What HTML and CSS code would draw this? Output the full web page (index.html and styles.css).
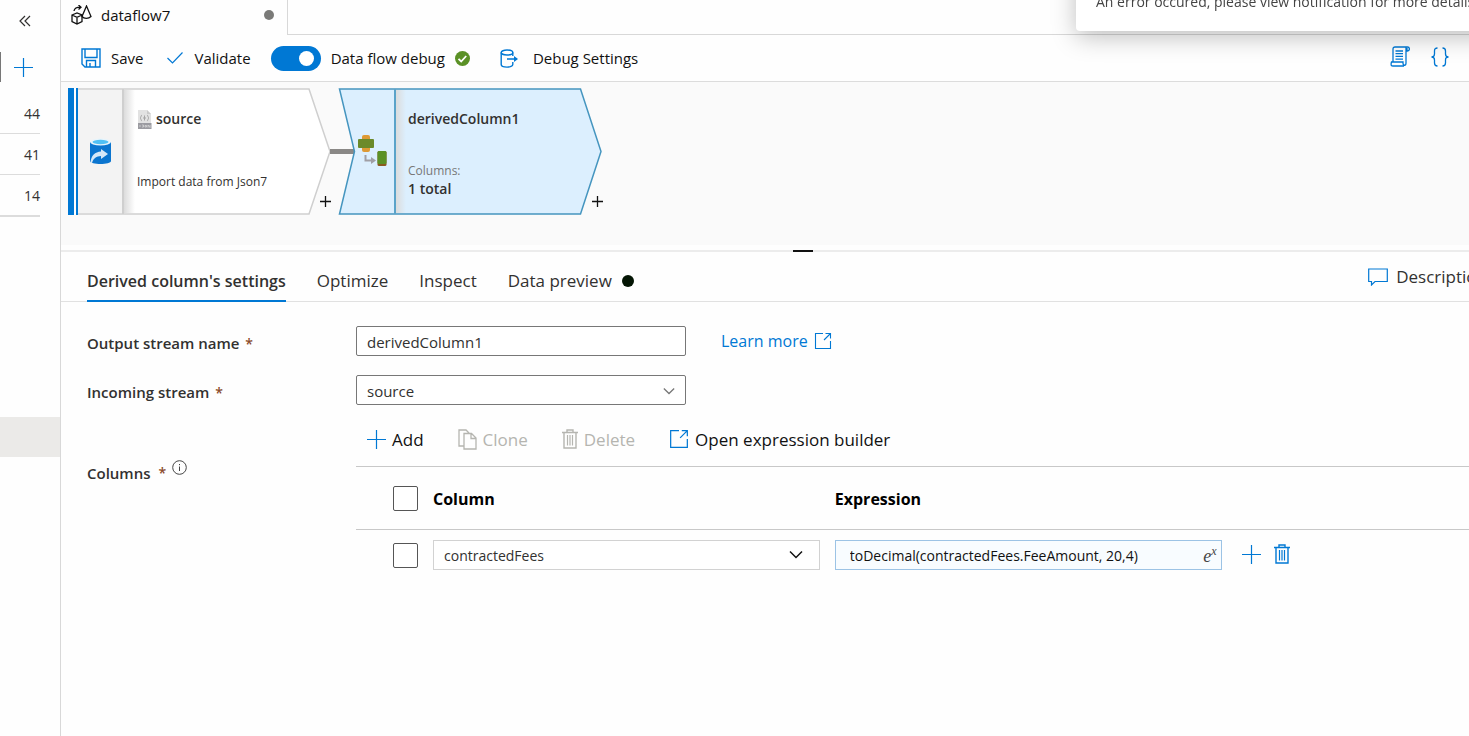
FILE: index.html
```html
<!DOCTYPE html>
<html lang="en">
<head>
    <meta charset="UTF-8">
    <meta name="viewport" content="width=device-width, initial-scale=1.0">
    <title>dataflow7</title>
    <link rel="stylesheet" href="styles.css">
</head>
<body>
    <svg class="sprite" aria-hidden="true">
        <symbol id="plus" viewBox="0 0 20 20">
            <path d="M10.500 1v19M1 10.500h19" fill="none" stroke="currentColor" stroke-width="1.200"/>
        </symbol>
        <symbol id="open" viewBox="0 0 18 18">
            <path d="M9 1.500H1.500v15h15V9M10 8l6.500-6.500M11.500 1.500h5v5" fill="none" stroke="currentColor" stroke-width="1.100"/>
        </symbol>
        <symbol id="trash" viewBox="0 0 16 20">
            <path d="M0 3.500h16M5 3.500V1h6v2.500M2 3.500V19h12V3.500" fill="none" stroke="currentColor" stroke-width="1.400"/>
            <path d="M5.500 6v10.500M8 6v10.500M10.500 6v10.500" fill="none" stroke="currentColor" stroke-width="1.200"/>
        </symbol>
        <symbol id="chevron" viewBox="0 0 14 9">
            <path d="M1 1.500l6 6 6-6" fill="none" stroke="currentColor" stroke-width="1.500"/>
        </symbol>
    </svg>

    <div class="app">
        <aside class="sidebar">
            <button class="collapse" aria-label="Collapse">
                <svg width="12" height="12" viewBox="0 0 12 12"><path d="M6 1L1 6l5 5M11 1L6 6l5 5" fill="none" stroke="currentColor" stroke-width="1.200"/></svg>
            </button>
            <div class="filter">
                <span class="search-edge"></span>
                <button aria-label="New resource"><svg class="blue" width="20" height="20"><use href="#plus"/></svg></button>
            </div>
            <ul class="counts">
                <li>44</li>
                <li>41</li>
                <li>14</li>
            </ul>
            <div class="selected"></div>
        </aside>

        <main class="main">
            <header class="tabbar">
                <div class="file-tab">
                    <svg width="21" height="20" viewBox="0 0 21 20" fill="none" stroke="#111" stroke-width="1.300">
                        <path d="M1 10l5-2 5 2v6.500L6 19l-5-2.500zM1 10l5 2.300L11 10M6 12.300V19"/>
                        <path d="M15.500 1L11 11.500c2 2.500 6.500 2.500 9 0z"/>
                        <path d="M3 6c.5-3 3-3.800 6.500-3.800M7.500 0l2.500 2.200-2.500 2.300"/>
                    </svg>
                    <span>dataflow7</span>
                    <i class="unsaved"></i>
                </div>
                <div class="tab-rest"></div>
            </header>

            <div class="toolbar">
                <button class="tool save">
                    <svg class="blue" width="20" height="20" viewBox="0 0 20 20" fill="none" stroke="currentColor" stroke-width="1.400"><path d="M1 1h18v18H4l-3-3zM4 1v8.500h12V1M5.500 19v-6.500h9V19M9 19v-4"/></svg>
                    Save
                </button>
                <button class="tool validate">
                    <svg class="blue" width="16" height="12" viewBox="0 0 16 12" fill="none" stroke="currentColor" stroke-width="1.200"><path d="M.5 6l5 5L15.500.5"/></svg>
                    Validate
                </button>
                <label class="tool debug">
                    <input type="checkbox" class="toggle" checked>
                    Data flow debug
                    <svg width="15" height="15" viewBox="0 0 15 15"><circle cx="7.500" cy="7.500" r="7.500" fill="#5b9126"/><path d="M3.500 7.800l2.700 2.700 5-5.500" fill="none" stroke="#fff" stroke-width="1.800"/></svg>
                </label>
                <button class="tool settings">
                    <svg class="blue" width="19" height="19" viewBox="0 0 19 19" fill="none" stroke="currentColor" stroke-width="1.400"><ellipse cx="7" cy="3.500" rx="5.800" ry="2.500"/><path d="M1.200 3.500v12C1.200 19 12.800 19 12.800 15.500V13M12.800 3.500V7M7 10h9"/><path d="M14 7l4 3-4 3z" fill="currentColor" stroke="none"/></svg>
                    Debug Settings
                </button>
                <div class="tool-end">
                    <button aria-label="Script">
                        <svg class="blue" width="20" height="21" viewBox="0 0 20 21" fill="none" stroke="currentColor" stroke-width="1.300"><path d="M3 16V3c0-1.500.8-2 2-2h12.500c2.500 0 2.500 4 0 4H15.500M16 1.200V17c0 3-3 3-3 0v-1H1.500c-1.200 4 .5 4 1.500 4h11M17 2v3"/><path d="M5.500 5h7.500M5.500 7.700h7.500M5.500 10.400h7.500M5.500 13.100h7.500"/></svg>
                    </button>
                    <button aria-label="Code">
                        <svg class="blue" width="18" height="20" viewBox="0 0 18 20" fill="none" stroke="currentColor" stroke-width="1.300"><path d="M6.500 1C4 1 3.500 2 3.500 4v3c0 2-.8 3-3 3 2.200 0 3 1 3 3v3c0 2 .5 3 3 3M11.500 1c2.500 0 3 1 3 3v3c0 2 .8 3 3 3-2.200 0-3 1-3 3v3c0 2-.5 3-3 3"/></svg>
                    </button>
                </div>
            </div>

            <section class="canvas">
                <svg class="graph" width="560" height="140" viewBox="0 0 560 140">
                    <defs>
                        <linearGradient id="fold"><stop offset="0" stop-color="#dcdcdc"/><stop offset="1" stop-color="#dcdcdc" stop-opacity="0"/></linearGradient>
                    </defs>
                    <path d="M16 7H248l21 62.500-21 62.500H16z" fill="#fff" stroke="#cfcfcf" stroke-width="1.500"/>
                    <path d="M16 8h46v123H16z" fill="#f3f3f3"/>
                    <path d="M63 8h11v123H63z" fill="url(#fold)"/>
                    <path d="M62 7v125" stroke="#cfcfcf" stroke-width="2"/>
                    <path d="M7 6h6v127H7zM15 6h2v127h-2z" fill="#0078d4"/>
                    <path d="M13 6h2v127h-2z" fill="#fff"/>
                    <path d="M269 69.500h25" stroke="#8a8886" stroke-width="5"/>
                    <path d="M278.500 7H519.500l20.500 62.500-20.500 62.500H278.500l15-62.500z" fill="#dceffe" stroke="#4595bf" stroke-width="1.500"/>
                    <path d="M335 8h10v123h-10z" fill="url(#fold)"/>
                    <path d="M334 7v125" stroke="#5ba3c9" stroke-width="2"/>
                    <!-- source cylinder -->
                    <path d="M29 60v19c0 4 21 4 21 0V60z" fill="#0b75cf"/>
                    <ellipse cx="39.500" cy="60" rx="10.500" ry="3.500" fill="#e8f4fb"/>
                    <ellipse cx="39.500" cy="60" rx="8" ry="2.200" fill="#50c0f5"/>
                    <path d="M29.500 81c.5-8 4.500-11 10.500-11.500V67l7 5-7 5v-3c-4.500.3-7.500 2-9 7z" fill="#d5e8f8"/>
                    <!-- json file -->
                    <path d="M77 28h9l4 4v14H77z" fill="#e2e2e2"/>
                    <path d="M86 28v4h4" fill="#cacaca"/>
                    <path d="M81 33c-1 0-1 3-2 3 1 0 1 3 2 3M86 33c1 0 1 3 2 3-1 0-1 3-2 3M83.500 33.500v5M82 36h3" fill="none" stroke="#a5a5a5"/>
                    <path d="M77 41h13.500v6H77z" fill="#9b9ba1"/>
                    <path d="M79 43v2M81 43h1.500v2H81M84 43.500h1.500v1.500H84zM87 45.500V43l2 2.500V43" fill="none" stroke="#dedede" stroke-width=".7"/>
                    <!-- derived column -->
                    <rect x="301" y="53" width="8" height="17" rx="2" fill="#dd9a36"/>
                    <rect x="297" y="57" width="16" height="9" rx="1" fill="#6b8a2a"/>
                    <rect x="316.500" y="69" width="9" height="15" rx="1.500" fill="#8a5a20"/>
                    <rect x="316.500" y="69" width="9" height="13" rx="1.500" fill="#5b9126"/>
                    <path d="M304.500 73v5.500h7" fill="none" stroke="#a09fa5" stroke-width="2"/>
                    <path d="M310 75l5 3.500-5 3.500z" fill="#a09fa5"/>
                </svg>
                <div class="node node-source">
                    <strong>source</strong>
                    <span>Import data from Json7</span>
                </div>
                <button class="node-add add-source" aria-label="Add after source"><svg width="11" height="11" viewBox="0 0 11 11"><path d="M5.500 0v11M0 5.500h11" stroke="#111" stroke-width="1.300"/></svg></button>
                <div class="node node-derived">
                    <strong>derivedColumn1</strong>
                    <div>
                        <small>Columns:</small>
                        <b>1 total</b>
                    </div>
                </div>
                <button class="node-add add-derived" aria-label="Add after derivedColumn1"><svg width="11" height="11" viewBox="0 0 11 11"><path d="M5.500 0v11M0 5.500h11" stroke="#111" stroke-width="1.300"/></svg></button>
            </section>

            <div class="splitter"><i></i></div>

            <nav class="tabs">
                <a href="#" class="active">Derived column's settings</a>
                <a href="#">Optimize</a>
                <a href="#">Inspect</a>
                <a href="#" class="preview">Data preview <i class="dot"></i></a>
                <a href="#" class="description">
                    <svg class="blue" width="20" height="18" viewBox="0 0 20 18" fill="none" stroke="currentColor" stroke-width="1.200"><path d="M.7 1h18.600v12.500H7L3.500 17v-3.500H.7z"/></svg>
                    Description
                </a>
            </nav>

            <form class="form">
                <label class="label" for="stream">Output stream name <span>*</span></label>
                <div class="field">
                    <input class="box" id="stream" type="text" value="derivedColumn1">
                    <a class="learn" href="#">Learn more <svg width="18" height="18"><use href="#open"/></svg></a>
                </div>

                <label class="label" for="incoming">Incoming stream <span>*</span></label>
                <div class="field">
                    <div class="select-wrap">
                        <select class="box" id="incoming"><option>source</option></select>
                        <svg class="arrow" width="12" height="8"><use href="#chevron"/></svg>
                    </div>
                </div>

                <div class="label columns-label">Columns <span>*</span>
                    <svg width="15" height="15" viewBox="0 0 15 15" fill="none" stroke="#444"><circle cx="7.500" cy="7.500" r="6.800"/><path d="M7.500 6.500V11M7.500 4v1.200"/></svg>
                </div>
                <div class="columns">
                    <div class="actions">
                        <button type="button" class="add"><svg class="blue" width="20" height="20"><use href="#plus"/></svg>Add</button>
                        <button type="button" class="clone" disabled><svg width="19" height="21" viewBox="0 0 19 21" fill="none" stroke="currentColor" stroke-width="1.300"><path d="M6 17H1V1h7l3 3M6 4.500h7.500l4.500 4.500v11H6zM13 4.500V9.500h5"/></svg>Clone</button>
                        <button type="button" class="delete" disabled><svg width="16" height="20"><use href="#trash"/></svg>Delete</button>
                        <button type="button" class="builder"><svg class="blue" width="20" height="20"><use href="#open"/></svg>Open expression builder</button>
                    </div>
                    <table class="grid">
                        <thead>
                            <tr>
                                <th class="check"><input type="checkbox" aria-label="Select all"></th>
                                <th class="col">Column</th>
                                <th class="col">Expression</th>
                                <th></th>
                            </tr>
                        </thead>
                        <tbody>
                            <tr>
                                <td class="check"><input type="checkbox" aria-label="Select contractedFees"></td>
                                <td>
                                    <div class="select-wrap">
                                        <select class="cell" aria-label="Column"><option>contractedFees</option></select>
                                        <svg class="arrow dark" width="14" height="9"><use href="#chevron"/></svg>
                                    </div>
                                </td>
                                <td>
                                    <div class="select-wrap">
                                        <input class="cell expr" type="text" aria-label="Expression" value="toDecimal(contractedFees.FeeAmount, 20,4)">
                                        <span class="ex">e<sup>x</sup></span>
                                    </div>
                                </td>
                                <td>
                                    <div class="row-actions">
                                        <button type="button" aria-label="Add"><svg class="blue" width="20" height="20"><use href="#plus"/></svg></button>
                                        <button type="button" aria-label="Delete"><svg class="blue" width="16" height="20"><use href="#trash"/></svg></button>
                                    </div>
                                </td>
                            </tr>
                        </tbody>
                    </table>
                </div>
            </form>
        </main>
    </div>

    <div class="toast">An error occured, please view notification for more details</div>
</body>
</html>
```
FILE: styles.css
```css
*{
    box-sizing: border-box;
}
body{
    margin: 0;
    overflow: hidden;
    font-family: "Open Sans", "Noto Sans", sans-serif;
    font-size: 15px;
    color: #323130;
    background: #fefefe;
}
button{
    display: flex;
    align-items: center;
    padding: 0;
    border: 0;
    background: none;
    font: inherit;
    color: inherit;
}
a{
    color: inherit;
    text-decoration: none;
}
svg{
    display: block;
    flex: none;
}
.sprite{
    position: absolute;
    width: 0;
    height: 0;
}
.blue{
    color: #0078d4;
}
.app{
    display: flex;
    min-height: 100vh;
}

/* sidebar */
.sidebar{
    flex: none;
    width: 61px;
    border-right: 1px solid #d8d8d8;
}
.collapse{
    margin: 15px 0 0 19px;
}
.filter{
    display: flex;
    align-items: center;
    gap: 12px;
    height: 30px;
    margin-top: 25px;
}
.search-edge{
    width: 1px;
    height: 30px;
    background: #777;
}
.counts{
    list-style: none;
    margin: 11px 20px 0 0;
    padding: 0;
    font-size: 14px;
    text-align: right;
}
.counts li{
    height: 41px;
    line-height: 42px;
    border-bottom: 1px solid #dcdcdc;
}
.counts li:last-child{
    height: 42px;
    border-bottom-width: 2px;
}
.selected{
    height: 40px;
    margin-top: 200px;
    background: #ebeae8;
}

/* top bars */
.main{
    flex: 1;
    min-width: 0;
}
.tabbar{
    display: flex;
    height: 35px;
}
.file-tab{
    display: flex;
    align-items: center;
    gap: 9px;
    width: 227px;
    padding: 0 13px 6px 10px;
    border-right: 1px solid #d8d8d8;
    color: #111;
}
.unsaved{
    width: 10px;
    height: 10px;
    margin-left: auto;
    border-radius: 50%;
    background: #7a7a78;
}
.tab-rest{
    flex: 1;
    border-bottom: 1px solid #d8d8d8;
}
.toolbar{
    display: flex;
    align-items: center;
    height: 47px;
    padding: 0 20px;
    border-bottom: 1px solid #dcdcdc;
    color: #111;
}
.tool{
    display: flex;
    align-items: center;
    gap: 10px;
}
.validate{
    margin-left: 24px;
    gap: 11px;
}
.debug{
    margin-left: 20px;
}
.settings{
    margin-left: 30px;
    gap: 14px;
}
.toggle{
    appearance: none;
    display: flex;
    justify-content: flex-end;
    width: 50px;
    height: 25px;
    margin: 0;
    padding: 5px 7px;
    border-radius: 13px;
    background: #0078d4;
}
.toggle::before{
    content: "";
    width: 15px;
    height: 15px;
    border-radius: 50%;
    background: #fff;
}
.tool-end{
    display: flex;
    gap: 21px;
    margin-left: auto;
    padding-bottom: 3px;
}

/* data flow canvas */
.canvas{
    position: relative;
    height: 163px;
    background: #fafafa;
}
.graph, .node, .node-add{
    position: absolute;
}
.graph{
    left: 0;
    top: 0;
}
.node{
    display: flex;
    flex-direction: column;
    justify-content: space-between;
    top: 28px;
    font-size: 12px;
    line-height: 18px;
}
.node strong, .node b{
    display: block;
    font-size: 14px;
    font-weight: 600;
}
.node small{
    display: block;
    font-size: 12px;
    color: #777;
}
.node-source{
    left: 76px;
    height: 81px;
}
.node-source strong{
    padding-left: 19px;
}
.node-derived{
    left: 347px;
    height: 88px;
}
.node-add{
    top: 114px;
}
.add-source{
    left: 259px;
}
.add-derived{
    left: 531px;
}
.splitter{
    display: flex;
    justify-content: center;
    align-items: flex-end;
    height: 7px;
    border-bottom: 2px solid #ececec;
}
.splitter i{
    flex: none;
    width: 20px;
    height: 2px;
    margin: 0 0 -2px 75px;
    background: #111;
}

/* settings */
.tabs{
    display: flex;
    gap: 31px;
    height: 50px;
    padding-left: 26px;
    border-bottom: 1px solid #e1e1e1;
    font-size: 17px;
    line-height: 58px;
    white-space: nowrap;
}
.tabs a{
    height: 50px;
}
.tabs .active{
    border-bottom: 2px solid #0078d4;
    font-size: 16px;
    font-weight: 600;
}
.tabs .preview, .tabs .description{
    display: flex;
    gap: 10px;
}
.tabs .description{
    align-items: center;
    gap: 8px;
    margin: 0 -18px 0 auto;
}
.dot{
    width: 12px;
    height: 12px;
    margin-top: 23px;
    border-radius: 50%;
    background: #041504;
}
.form{
    display: grid;
    grid-template-columns: 269px minmax(0, 1fr);
    row-gap: 19px;
    padding: 24px 0 0 26px;
}
.label{
    height: 30px;
    font-weight: 600;
    line-height: 34px;
}
.label span{
    margin-left: 2px;
    font-size: 14px;
    color: #8a4b2a;
}
.field{
    display: flex;
    align-items: center;
    height: 30px;
    gap: 35px;
}
.box, .cell{
    appearance: none;
    display: block;
    width: 330px;
    height: 30px;
    padding: 2px 10px 0;
    border: 1px solid #777;
    border-radius: 2px;
    background: #fff;
    font: inherit;
    color: #323130;
}
.learn{
    display: flex;
    gap: 6px;
    align-items: center;
    font-size: 16px;
    color: #0078d4;
}
.select-wrap{
    position: relative;
}
.arrow{
    position: absolute;
    right: 11px;
    top: 12px;
    color: #777;
}
.arrow.dark{
    right: 17px;
    top: 10px;
    color: #111;
}
.columns-label{
    display: flex;
    align-items: flex-start;
    gap: 6px;
    padding-top: 32px;
}
.columns-label svg{
    margin-top: 4px;
}
.actions{
    display: flex;
    align-items: center;
    height: 42px;
    padding: 0 0 12px 10px;
    font-size: 17px;
    color: #111;
}
.actions button{
    gap: 6px;
}
.actions button:disabled{
    color: #b5b5b0;
}
.actions .clone, .actions .delete, .actions .builder{
    margin-left: 34px;
}
.grid{
    width: 100%;
    table-layout: fixed;
    border-collapse: collapse;
    border-top: 1px solid #c8c8c8;
}
.grid th, .grid td{
    padding: 0 15px 0 0;
    text-align: left;
}
.grid th{
    height: 63px;
    padding-top: 1px;
    border-bottom: 1px solid #c8c8c8;
    font-size: 16px;
    font-weight: 700;
    color: #000;
}
.grid td{
    padding-top: 10px;
}
.grid .check{
    width: 77px;
    padding-left: 37px;
}
.grid .col{
    width: 36.1%;
}
.check input{
    appearance: none;
    display: block;
    width: 25px;
    height: 25px;
    margin: 0;
    border: 1px solid #555;
    border-radius: 2px;
    background: #fff;
}
.cell{
    width: 100%;
    padding: 0 10px;
    border-color: #d2d2d2;
    border-radius: 0;
    font-size: 14px;
}
.expr{
    padding: 1px 50px 0 14px;
    border-color: #9cc3e5;
    background: #f8fcff;
    color: #111;
}
.ex{
    position: absolute;
    right: 5px;
    top: 6px;
    font: italic 18px/20px "Liberation Serif", serif;
    color: #444;
}
.ex sup{
    font-size: 12px;
    line-height: 0;
}
.row-actions{
    display: flex;
    gap: 13px;
    padding: 0 0 2px 4px;
}

/* error notification */
.toast{
    position: fixed;
    top: -40px;
    right: -30px;
    left: 1076px;
    height: 71px;
    padding: 31px 20px 0;
    border-radius: 4px;
    background: #fff;
    box-shadow: 0 6px 24px rgba(0,0,0,0.25);
    font-size: 14px;
    line-height: 22px;
    color: #444;
    white-space: nowrap;
}
```
